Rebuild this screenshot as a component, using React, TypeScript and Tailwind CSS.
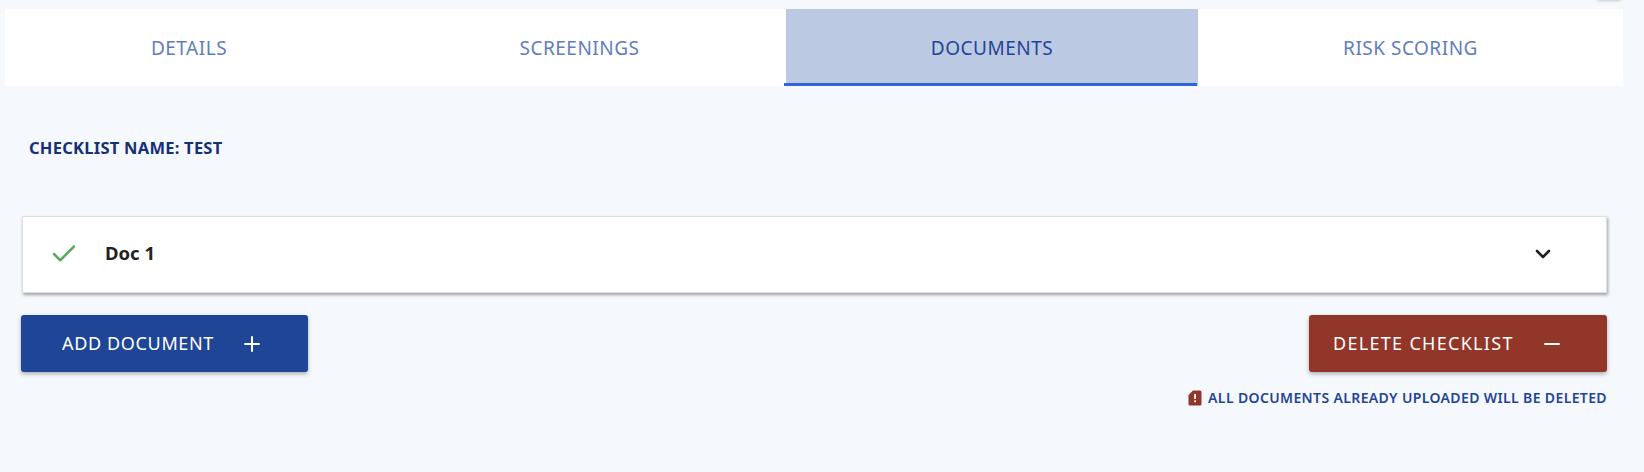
import { Check, ChevronDown, Minus, Plus } from "lucide-react";

const TABS = [
  { label: "DETAILS", width: "w-[368px]" },
  { label: "SCREENINGS", width: "w-[413px]" },
  { label: "DOCUMENTS", width: "w-[412px]", active: true },
  { label: "RISK SCORING", width: "w-[425px]" },
];

function SimCardAlert() {
  return (
    <svg width="14" height="16" viewBox="0 0 14 16" className="shrink-0">
      <path d="M5 0.5h7a1.5 1.5 0 0 1 1.5 1.5v12a1.5 1.5 0 0 1-1.5 1.5H2A1.5 1.5 0 0 1 .5 14V5z" fill="#93362a" />
      <rect x="6.2" y="4" width="1.8" height="5" fill="#fff" />
      <rect x="6.2" y="10.4" width="1.8" height="1.8" fill="#fff" />
    </svg>
  );
}

export default function App() {
  return (
    <div className="relative h-[472px] w-[1644px] overflow-hidden bg-[#f5f8fd] pt-[9px] font-['Noto_Sans','Open_Sans',sans-serif]">
      <div className="absolute right-[21px] top-[-10px] h-[10px] w-[28px] rounded-full bg-[#f5f8fd] shadow-[0_1px_3px_rgba(0,0,0,0.18)]" />

      <div className="ml-[5px] flex h-[77px] w-[1618px] bg-white">
        {TABS.map((tab) => (
          <div key={tab.label}
            className={`relative flex items-center justify-center pt-[1px] text-[19px] tracking-[0.5px] ${tab.width} ${tab.active ? "bg-[#bcc9e3] text-[#1f4597]" : "text-[#5f7dbd]"}`}>
            {tab.label}
            {tab.active && <span className="absolute bottom-0 left-[-2px] right-[1px] h-[3px] bg-[#2f65d9]" />}
          </div>
        ))}
      </div>

      <div className="ml-[29px] mt-[52px] text-[16.5px] font-bold leading-[20px] tracking-[0.25px] text-[#163075]">CHECKLIST NAME: TEST</div>

      <div className="ml-[22px] mt-[58px] flex h-[77px] w-[1585px] items-center border border-[#e0e0e0] bg-white pb-[2px] pl-[26px] pr-[51px] shadow-[1px_2px_3px_rgba(0,0,0,0.35)]">
        <Check size={30} strokeWidth={2} className="text-[#5cab5c]" />
        <span className="ml-[26px] pb-[2px] text-[18.5px] font-bold text-[#222222]">Doc 1</span>
        <ChevronDown size={24} strokeWidth={2.6} className="ml-auto text-[#222222]" />
      </div>

      <div className="ml-[21px] mt-[22px] flex w-[1586px] items-start justify-between">
        <button className="flex h-[57px] w-[287px] items-center rounded-[3px] bg-[#1f4597] pl-[41px] text-[18px] tracking-[0.65px] text-white shadow-[0_2px_4px_rgba(0,0,0,0.3)]">
          ADD DOCUMENT
          <Plus size={24} strokeWidth={2} className="ml-[26px]" />
        </button>
        <div className="flex flex-col items-end">
          <button className="flex h-[57px] w-[298px] items-center rounded-[3px] bg-[#93362a] pl-[24px] text-[18px] tracking-[1.3px] text-white shadow-[0_2px_4px_rgba(0,0,0,0.3)]">
            DELETE CHECKLIST
            <Minus size={24} strokeWidth={2} className="ml-[26px]" />
          </button>
          <div className="mt-[17px] flex items-center gap-[6px] text-[14px] font-semibold leading-[18px] tracking-[0.37px] text-[#1f4597]">
            <SimCardAlert />
            ALL DOCUMENTS ALREADY UPLOADED WILL BE DELETED
          </div>
        </div>
      </div>
    </div>
  );
}
